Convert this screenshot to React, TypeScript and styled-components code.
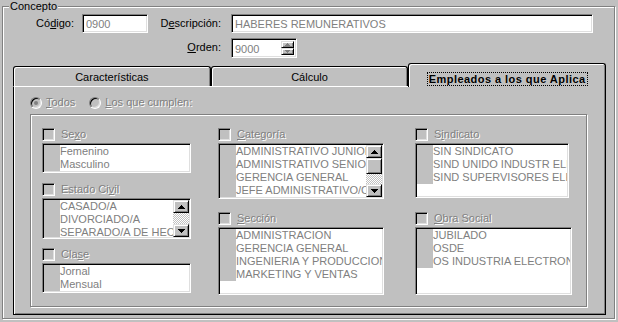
import React from "react";
import styled, { createGlobalStyle, css } from "styled-components";

const GlobalStyle = createGlobalStyle`
  html, body { margin: 0; padding: 0; background: #c0c0c0; }
  body { font-family: "Liberation Sans", Arial, sans-serif; font-size: 11px; color: #000; }
  * { box-sizing: border-box; }
`;

const sunken = css`
  border: 1px solid;
  border-color: #808080 #fff #fff #808080;
  box-shadow: inset 1px 1px 0 #000, inset -1px -1px 0 #dfdfdf;
`;

const raised = css`
  background: #c0c0c0;
  border: 1px solid;
  border-color: #dfdfdf #000 #000 #dfdfdf;
  box-shadow: inset 1px 1px 0 #fff, inset -1px -1px 0 #808080;
`;

const etched = css`
  border: 1px solid #808080;
  box-shadow: inset 1px 1px 0 #fff, 1px 1px 0 #fff;
`;

const disabledText = css`
  color: #808080;
  text-shadow: 1px 1px 0 #fff;
`;

const Screen = styled.div`
  width: 618px;
  height: 322px;
  padding: 6px 3px 0 2px;
  background: #c0c0c0;
  overflow: hidden;
`;

const GroupFrame = styled.section`
  position: relative;
  width: 613px;
  height: 313px;
  ${etched}
`;

const Legend = styled.span`
  position: absolute;
  top: -7px;
  left: 6px;
  padding: 0 1px;
  line-height: 13px;
  background: #c0c0c0;
`;

const FormGrid = styled.div`
  display: grid;
  grid-template-columns: 79px 66px 83px 362px;
  grid-template-rows: 19px 19px;
  row-gap: 5px;
  align-items: center;
  padding-top: 7px;
`;

const FieldLabel = styled.label<{ $pad: number }>`
  text-align: right;
  padding-right: ${(p) => p.$pad}px;
  line-height: 13px;
`;

const TextField = styled.input<{ $w: number }>`
  ${sunken}
  width: ${(p) => p.$w}px;
  height: 19px;
  margin: 0;
  padding: 0 0 0 3px;
  background: #fff;
  color: #808080;
  font: inherit;
  outline: none;
`;

const SpinBox = styled.div`
  ${sunken}
  width: 66px;
  height: 20px;
  padding: 2px;
  background: #fff;
  display: flex;
  align-items: stretch;
`;

const SpinValue = styled.span`
  flex: 1;
  padding-left: 1px;
  line-height: 16px;
  color: #808080;
`;

const SpinButtons = styled.div`
  width: 13px;
  display: flex;
  flex-direction: column;
`;

const SpinBtn = styled.div`
  ${raised}
  flex: 1;
  display: flex;
  align-items: center;
  justify-content: center;
`;

const TabStrip = styled.div`
  display: flex;
  align-items: flex-end;
  height: 23px;
  margin: 6px 8px 0 10px;
`;

const Tab = styled.div<{ $active?: boolean }>`
  position: relative;
  z-index: ${(p) => (p.$active ? 2 : 0)};
  flex: 1 1 0;
  height: ${(p) => (p.$active ? 24 : 20)}px;
  margin-bottom: ${(p) => (p.$active ? -1 : 0)}px;
  display: flex;
  justify-content: center;
  align-items: ${(p) => (p.$active ? "flex-start" : "center")};
  padding-top: ${(p) => (p.$active ? 8 : 0)}px;
  background: #c0c0c0;
  border: 1px solid #000;
  border-bottom: none;
  border-radius: 3px 3px 0 0;
  box-shadow: inset 1px 1px 0 #fff, inset -1px 0 0 #808080;
  font-weight: ${(p) => (p.$active ? "bold" : "normal")};
  letter-spacing: ${(p) => (p.$active ? "0.45px" : "0")};
  line-height: 12px;
`;

const FocusLabel = styled.span`
  border: 1px dotted #000;
  padding: 0 1px;
  line-height: 12px;
`;

const TabPanel = styled.div`
  height: 229px;
  margin: 0 8px 0 10px;
  border: 1px solid #000;
  border-top-color: #fff;
  box-shadow: inset 1px 0 0 #fff, inset -1px -1px 0 #808080;
  padding: 9px 0 0 16px;
`;

const RadioRow = styled.div`
  display: flex;
  align-items: center;
  gap: 14px;
  height: 13px;
`;

const RadioItem = styled.label`
  display: flex;
  align-items: center;
  gap: 4px;
  line-height: 13px;
  ${disabledText}
`;

const RadioCircle = styled.span<{ $checked?: boolean }>`
  position: relative;
  width: 12px;
  height: 12px;
  border-radius: 50%;
  border: 1px solid;
  border-color: #808080 #fff #fff #808080;
  box-shadow: inset 1px 1px 0 #000, inset -1px -1px 0 #dfdfdf;
  background: #c0c0c0;
  &::after {
    content: "";
    display: ${(p) => (p.$checked ? "block" : "none")};
    position: absolute;
    left: 3px;
    top: 3px;
    width: 4px;
    height: 4px;
    border-radius: 50%;
    background: #808080;
  }
`;

const InnerGroup = styled.div`
  ${etched}
  width: 557px;
  height: 193px;
  margin-top: 5px;
  padding: 13px 0 0 11px;
  display: flex;
  align-items: flex-start;
`;

const Column = styled.div<{ $w: number; $gap: number }>`
  width: ${(p) => p.$w}px;
  margin-right: ${(p) => p.$gap}px;
  display: flex;
  flex-direction: column;
`;

const CheckRow = styled.label<{ $mt: number }>`
  display: flex;
  align-items: center;
  gap: 6px;
  height: 13px;
  margin-top: ${(p) => p.$mt}px;
  line-height: 13px;
  ${disabledText}
`;

const CheckBox = styled.span`
  ${sunken}
  width: 13px;
  height: 13px;
  flex: none;
  background: #c0c0c0;
`;

const ListBox = styled.div<{ $w: number; $h: number }>`
  ${sunken}
  width: ${(p) => p.$w}px;
  height: ${(p) => p.$h}px;
  margin-top: 2px;
  padding: 1px;
  background: #fff;
  display: flex;
  overflow: hidden;
`;

const ListItems = styled.div`
  flex: 1;
  min-width: 0;
  overflow: hidden;
`;

const ListItem = styled.div`
  display: flex;
  height: 13px;
  line-height: 13px;
  white-space: nowrap;
  color: #808080;
`;

const ItemIcon = styled.span`
  width: 16px;
  flex: none;
  background: #c0c0c0;
`;

const ScrollBar = styled.div`
  width: 16px;
  flex: none;
  display: flex;
  flex-direction: column;
`;

const ScrollBtn = styled.div`
  ${raised}
  height: 13px;
  flex: none;
  display: flex;
  align-items: center;
  justify-content: center;
`;

const ScrollThumb = styled.div`
  ${raised}
  height: 16px;
  flex: none;
`;

const ScrollTrack = styled.div`
  flex: 1;
  background: repeating-conic-gradient(#c0c0c0 0 25%, #fff 0 50%) 0 0 / 2px 2px;
`;

const Arrow = ({ down, color = "#000" }: { down?: boolean; color?: string }) => (
  <svg width="7" height="4" viewBox="0 0 7 4" shapeRendering="crispEdges" style={{ transform: down ? "scaleY(-1)" : undefined }}>
    <path d="M3 0h1v1h1v1h1v1h1v1H0V3h1V2h1V1h1z" fill={color} />
  </svg>
);

const SmallArrow = ({ down }: { down?: boolean }) => (
  <svg width="5" height="3" viewBox="0 0 5 3" shapeRendering="crispEdges" style={{ transform: down ? "scaleY(-1)" : undefined }}>
    <path d="M2 0h1v1h1v1h1v1H0V2h1V1h1z" fill="#808080" />
  </svg>
);

type Group = {
  label: [string, string, string];
  mt: number;
  w: number;
  h: number;
  items: string[];
  scroll?: "thumb" | "plain";
};

const columns: { w: number; gap: number; groups: Group[] }[] = [
  {
    w: 149,
    gap: 27,
    groups: [
      { label: ["Se", "x", "o"], mt: 0, w: 149, h: 30, items: ["Femenino", "Masculino"] },
      {
        label: ["Estado Ci", "v", "il"],
        mt: 10,
        w: 149,
        h: 41,
        items: ["CASADO/A", "DIVORCIADO/A", "SEPARADO/A DE HECHO"],
        scroll: "plain",
      },
      { label: ["Cla", "s", "e"], mt: 9, w: 149, h: 30, items: ["Jornal", "Mensual"] },
    ],
  },
  {
    w: 166,
    gap: 31,
    groups: [
      {
        label: ["", "C", "ategoría"],
        mt: 0,
        w: 166,
        h: 56,
        items: ["ADMINISTRATIVO JUNIOR", "ADMINISTRATIVO SENIOR", "GERENCIA GENERAL", "JEFE ADMINISTRATIVO/CONTABLE"],
        scroll: "thumb",
      },
      {
        label: ["", "S", "ección"],
        mt: 13,
        w: 166,
        h: 68,
        items: ["ADMINISTRACION", "GERENCIA GENERAL", "INGENIERIA Y PRODUCCION", "MARKETING Y VENTAS"],
      },
    ],
  },
  {
    w: 157,
    gap: 0,
    groups: [
      {
        label: ["S", "i", "ndicato"],
        mt: 0,
        w: 154,
        h: 55,
        items: ["SIN SINDICATO", "SIND UNIDO INDUSTR ELECTRONICA", "SIND SUPERVISORES ELECTRONICA"],
      },
      {
        label: ["", "O", "bra Social"],
        mt: 14,
        w: 157,
        h: 68,
        items: ["JUBILADO", "OSDE", "OS INDUSTRIA ELECTRONICA"],
      },
    ],
  },
];

const FilterGroup = ({ g }: { g: Group }) => (
  <>
    <CheckRow $mt={g.mt}>
      <CheckBox />
      <span>
        {g.label[0]}
        <u>{g.label[1]}</u>
        {g.label[2]}
      </span>
    </CheckRow>
    <ListBox $w={g.w} $h={g.h}>
      <ListItems>
        {g.items.map((it) => (
          <ListItem key={it}>
            <ItemIcon />
            <span>{it}</span>
          </ListItem>
        ))}
      </ListItems>
      {g.scroll && (
        <ScrollBar>
          <ScrollBtn>
            <Arrow />
          </ScrollBtn>
          {g.scroll === "thumb" && <ScrollThumb />}
          <ScrollTrack />
          <ScrollBtn>
            <Arrow down />
          </ScrollBtn>
        </ScrollBar>
      )}
    </ListBox>
  </>
);

export default function App() {
  return (
    <>
      <GlobalStyle />
      <Screen>
        <GroupFrame>
          <Legend>Concepto</Legend>
          <FormGrid>
            <FieldLabel $pad={8}>
              Có<u>d</u>igo:
            </FieldLabel>
            <TextField $w={66} readOnly value="0900" />
            <FieldLabel $pad={10}>
              D<u>e</u>scripción:
            </FieldLabel>
            <TextField $w={362} readOnly value="HABERES REMUNERATIVOS" />
            <span />
            <span />
            <FieldLabel $pad={10}>
              <u>O</u>rden:
            </FieldLabel>
            <SpinBox>
              <SpinValue>9000</SpinValue>
              <SpinButtons>
                <SpinBtn>
                  <SmallArrow />
                </SpinBtn>
                <SpinBtn>
                  <SmallArrow down />
                </SpinBtn>
              </SpinButtons>
            </SpinBox>
          </FormGrid>
          <TabStrip>
            <Tab>Características</Tab>
            <Tab>Cálculo</Tab>
            <Tab $active>
              <FocusLabel>Empleados a los que Aplica</FocusLabel>
            </Tab>
          </TabStrip>
          <TabPanel>
            <RadioRow>
              <RadioItem>
                <RadioCircle $checked />
                <span>
                  <u>T</u>odos
                </span>
              </RadioItem>
              <RadioItem>
                <RadioCircle />
                <span>
                  <u>L</u>os que cumplen:
                </span>
              </RadioItem>
            </RadioRow>
            <InnerGroup>
              {columns.map((c, i) => (
                <Column key={i} $w={c.w} $gap={c.gap}>
                  {c.groups.map((g) => (
                    <FilterGroup key={g.label.join("")} g={g} />
                  ))}
                </Column>
              ))}
            </InnerGroup>
          </TabPanel>
        </GroupFrame>
      </Screen>
    </>
  );
}
